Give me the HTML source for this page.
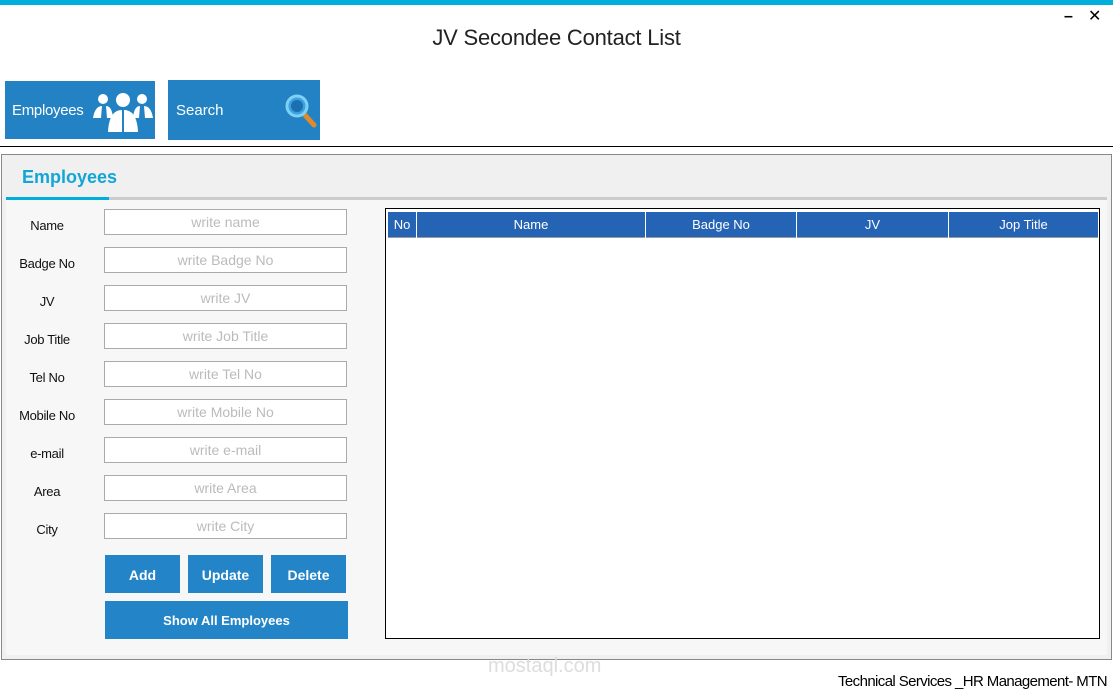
<!DOCTYPE html><html><head><style>
body{margin:0;width:1113px;height:696px;background:#fff;position:relative;overflow:hidden;font-family:"Liberation Sans",sans-serif}
div{box-sizing:border-box}
.a{position:absolute}
.lbl{position:absolute;left:0;width:94px;text-align:center;font-size:13px;color:#111;letter-spacing:-0.3px}
.inp{position:absolute;left:104px;width:243px;height:26px;border:1px solid #aaa;background:#fff;color:#bbb;font-size:14px;text-align:center;line-height:24px}
.btn{position:absolute;background:#2385c8;color:#fff;font-weight:bold;font-size:14px;text-align:center}
.hc{position:absolute;top:0;height:26px;line-height:26px;color:#fff;font-size:13px;text-align:center;border-right:1px solid #fff}
</style></head><body>
<div class="a" style="left:0;top:0;width:1113px;height:5px;background:#00aedb"></div>
<div class="a" style="left:0;top:25px;width:1113px;text-align:center;font-size:22px;color:#222;letter-spacing:-0.2px">JV Secondee Contact List</div>
<div class="a" style="left:1064px;top:8px;font-size:16px;font-weight:bold">–</div>
<div class="a" style="left:1088px;top:6px;font-size:16px">✕</div>
<div class="btn" style="left:5px;top:81px;width:150px;height:58px;font-weight:normal;font-size:15px;text-align:left;padding:21px 0 0 7px;background:#2382c4;letter-spacing:-0.3px">Employees
<svg class="a" style="left:87px;top:9px" width="62" height="42" viewBox="0 0 62 42" fill="#fff"><circle cx="11" cy="9" r="5"/><circle cx="31" cy="10" r="7"/><circle cx="50" cy="9" r="5"/><path d="M1 28 Q3 16 10 16 L9 28Z M14 16 Q20 16 21 28 L15 28Z M41 28 Q42 16 48 16 L47 28Z M52 16 Q59 16 61 28 L53 28Z"/><path d="M16 42 Q17 20 30 20 L30 42Z M32 20 Q45 20 46 42 L32 42Z"/></svg></div>
<div class="btn" style="left:168px;top:80px;width:152px;height:60px;font-weight:normal;font-size:15px;text-align:left;padding:22px 0 0 8px;background:#2382c4">Search
<svg class="a" style="left:116px;top:13px" width="34" height="36" viewBox="0 0 34 36"><line x1="20" y1="21" x2="30" y2="32" stroke="#e08a2a" stroke-width="5" stroke-linecap="round"/><circle cx="13" cy="13" r="10" fill="#3aa0e0" stroke="#7fd0f5" stroke-width="3"/><circle cx="13" cy="13" r="6" fill="#1c6fb0"/></svg></div>
<div class="a" style="left:0;top:146px;width:1113px;height:1px;background:#000"></div>
<div class="a" style="left:1px;top:154px;width:1111px;height:506px;border:1px solid #888;background:#f0f0f0"></div>
<div class="a" style="left:22px;top:167px;font-size:18px;font-weight:bold;color:#12a6d6">Employees</div>
<div class="a" style="left:6px;top:197px;width:1101px;height:3px;background:#ccc"></div>
<div class="a" style="left:6px;top:197px;width:103px;height:3px;background:#00aedb"></div>
<div class="a" style="left:6px;top:200px;width:1101px;height:455px;background:#f7f7f7"></div>
<div class="lbl" style="top:218px">Name</div><div class="inp" style="top:209px">write name</div>
<div class="lbl" style="top:256px">Badge No</div><div class="inp" style="top:247px">write Badge No</div>
<div class="lbl" style="top:294px">JV</div><div class="inp" style="top:285px">write JV</div>
<div class="lbl" style="top:332px">Job Title</div><div class="inp" style="top:323px">write Job Title</div>
<div class="lbl" style="top:370px">Tel No</div><div class="inp" style="top:361px">write Tel No</div>
<div class="lbl" style="top:408px">Mobile No</div><div class="inp" style="top:399px">write Mobile No</div>
<div class="lbl" style="top:446px">e-mail</div><div class="inp" style="top:437px">write e-mail</div>
<div class="lbl" style="top:484px">Area</div><div class="inp" style="top:475px">write Area</div>
<div class="lbl" style="top:522px">City</div><div class="inp" style="top:513px">write City</div>
<div class="btn" style="left:105px;top:555px;width:75px;height:38px;line-height:40px">Add</div>
<div class="btn" style="left:188px;top:555px;width:75px;height:38px;line-height:40px">Update</div>
<div class="btn" style="left:271px;top:555px;width:75px;height:38px;line-height:40px">Delete</div>
<div class="btn" style="left:105px;top:601px;width:243px;height:38px;line-height:40px;font-size:13px">Show All Employees</div>
<div class="a" style="left:385px;top:208px;width:715px;height:431px;border:1px solid #000;background:#fff">
<div class="a" style="left:2px;top:3px;width:710px;height:26px;background:#2563b4;border-bottom:1px solid #999">
<div class="hc" style="left:0;width:29px">No</div>
<div class="hc" style="left:29px;width:229px">Name</div>
<div class="hc" style="left:258px;width:151px">Badge No</div>
<div class="hc" style="left:409px;width:152px">JV</div>
<div class="hc" style="left:561px;width:149px;border:none">Jop Title</div>
</div></div>
<div class="a" style="left:488px;top:655px;font-size:20px;color:#ddd">mostaql.com</div>
<div class="a" style="right:6px;top:673px;font-size:15px;color:#000;letter-spacing:-0.6px">Technical Services _HR Management- MTN</div>
</body></html>
